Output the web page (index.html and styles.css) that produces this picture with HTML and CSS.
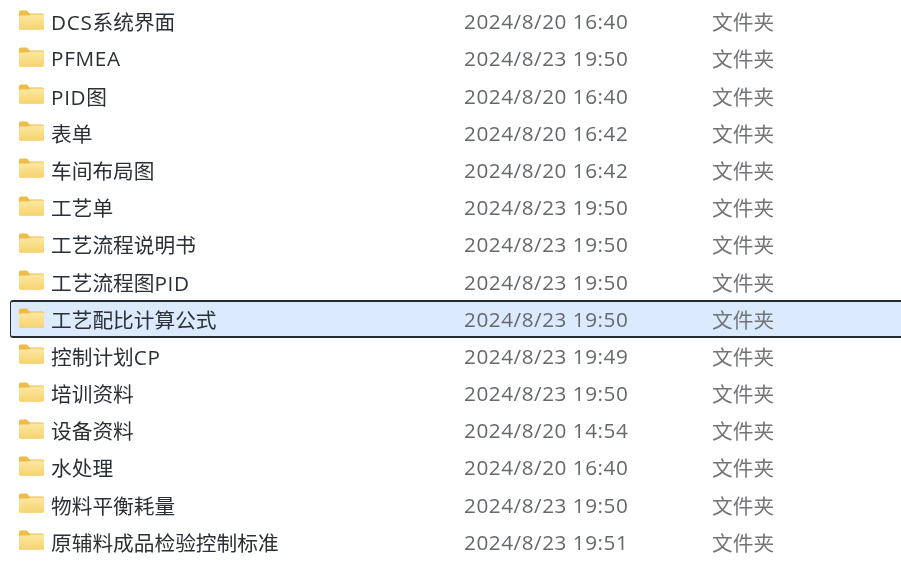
FILE: index.html
```html
<!DOCTYPE html>
<html lang="zh-CN">
<head>
  <meta charset="UTF-8" />
  <title>文件列表</title>
  <link rel="stylesheet" href="styles.css">
</head>
<body>

  <svg class="defs" width="0" height="0" aria-hidden="true">
    <defs>
      <linearGradient id="folderFront" x1="0" y1="0" x2="0" y2="1">
        <stop offset="0" stop-color="#fce8a2" />
        <stop offset="1" stop-color="#f6d36f" />
      </linearGradient>
      <symbol id="folder" viewBox="0 0 25 20">
        <path d="M0 2Q0 .5 1.5 .5H8L10.5 3.5H23.5Q25 3.5 25 5V18Q25 19.5 23.5 19.5H1.5Q0 19.5 0 18Z" fill="#efbc4c" />
        <path d="M0 7Q0 5.5 1.5 5.5H10L12 4.5H23.5Q25 4.5 25 6V18Q25 19.5 23.5 19.5H1.5Q0 19.5 0 18Z" fill="url(#folderFront)" />
      </symbol>
    </defs>
  </svg>

  <!-- FILE LIST -->
  <ul class="files">
    <li class="row"><svg class="icon"><use href="#folder" /></svg><span class="name"><span class="latin">DCS</span>系统界面</span><span class="date">2024/8/20 16:40</span><span class="type">文件夹</span></li>
    <li class="row"><svg class="icon"><use href="#folder" /></svg><span class="name"><span class="latin">PFMEA</span></span><span class="date">2024/8/23 19:50</span><span class="type">文件夹</span></li>
    <li class="row"><svg class="icon"><use href="#folder" /></svg><span class="name"><span class="latin">PID</span>图</span><span class="date">2024/8/20 16:40</span><span class="type">文件夹</span></li>
    <li class="row"><svg class="icon"><use href="#folder" /></svg><span class="name">表单</span><span class="date">2024/8/20 16:42</span><span class="type">文件夹</span></li>
    <li class="row"><svg class="icon"><use href="#folder" /></svg><span class="name">车间布局图</span><span class="date">2024/8/20 16:42</span><span class="type">文件夹</span></li>
    <li class="row"><svg class="icon"><use href="#folder" /></svg><span class="name">工艺单</span><span class="date">2024/8/23 19:50</span><span class="type">文件夹</span></li>
    <li class="row"><svg class="icon"><use href="#folder" /></svg><span class="name">工艺流程说明书</span><span class="date">2024/8/23 19:50</span><span class="type">文件夹</span></li>
    <li class="row"><svg class="icon"><use href="#folder" /></svg><span class="name">工艺流程图<span class="latin">PID</span></span><span class="date">2024/8/23 19:50</span><span class="type">文件夹</span></li>
    <li class="row selected"><svg class="icon"><use href="#folder" /></svg><span class="name">工艺配比计算公式</span><span class="date">2024/8/23 19:50</span><span class="type">文件夹</span></li>
    <li class="row"><svg class="icon"><use href="#folder" /></svg><span class="name">控制计划<span class="latin">CP</span></span><span class="date">2024/8/23 19:49</span><span class="type">文件夹</span></li>
    <li class="row"><svg class="icon"><use href="#folder" /></svg><span class="name">培训资料</span><span class="date">2024/8/23 19:50</span><span class="type">文件夹</span></li>
    <li class="row"><svg class="icon"><use href="#folder" /></svg><span class="name">设备资料</span><span class="date">2024/8/20 14:54</span><span class="type">文件夹</span></li>
    <li class="row"><svg class="icon"><use href="#folder" /></svg><span class="name">水处理</span><span class="date">2024/8/20 16:40</span><span class="type">文件夹</span></li>
    <li class="row"><svg class="icon"><use href="#folder" /></svg><span class="name">物料平衡耗量</span><span class="date">2024/8/23 19:50</span><span class="type">文件夹</span></li>
    <li class="row"><svg class="icon"><use href="#folder" /></svg><span class="name">原辅料成品检验控制标准</span><span class="date">2024/8/23 19:51</span><span class="type">文件夹</span></li>
  </ul>

</body>
</html>
```

FILE: styles.css
```css
body {
  margin: 0;
  background: #fff;
  overflow: hidden;
  font-family: "Open Sans", "Noto Sans CJK SC", sans-serif;
  font-size: 20.7px;
}
.defs {
  position: absolute;
}
/* the source is a slightly upscaled capture, hence the soft edges */
.files {
  list-style: none;
  margin: 0;
  padding: 2.6px 0 0 10px;
  filter: blur(0.45px);
}
.row {
  display: grid;
  grid-template-columns: 25px 405px 240px 1fr;
  column-gap: 8px;
  align-items: center;
  box-sizing: border-box;
  height: 37.2px;
  padding-left: 8px;
  border: 1px solid transparent;
  border-right: none;
  white-space: nowrap;
}
.selected {
  height: 38.2px;
  margin-bottom: -1px;
  background: #dbeafd;
  border-width: 2px 0 2px 1px;
  border-color: #26292d;
  border-radius: 3px 0 0 3px;
}
.icon {
  width: 25px;
  height: 20px;
  margin-bottom: 3px;
}
.name {
  color: #2b3036;
  margin-left: -1px;
}
.latin {
  letter-spacing: 0.7px;
}
.date {
  color: #65686c;
  letter-spacing: 0.55px;
  margin-left: -1px;
}
.type {
  color: #737578;
  margin-left: -1px;
}
```
